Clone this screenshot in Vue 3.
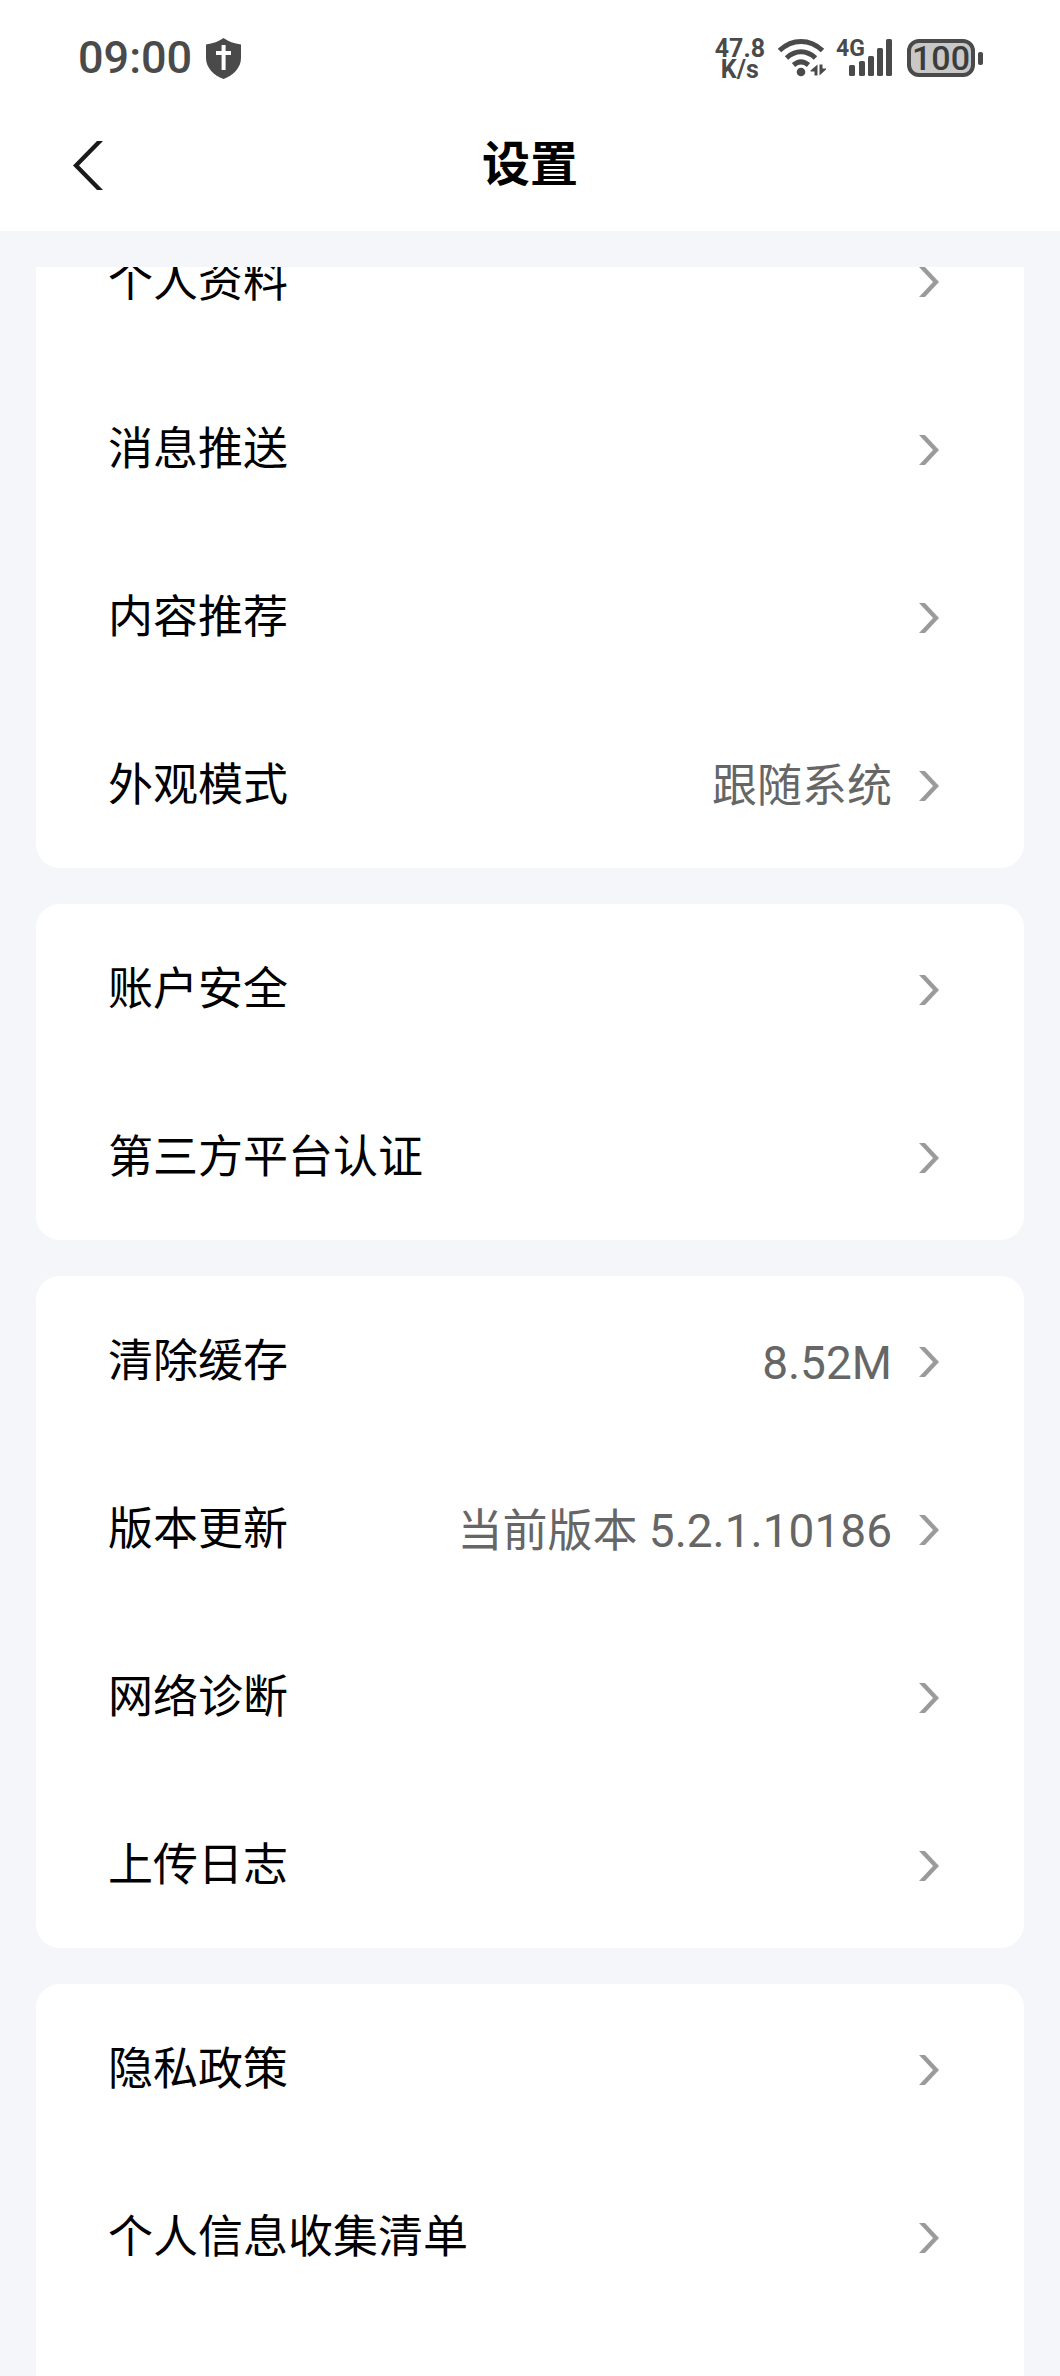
<script setup>
const groups = [
  {
    id: 'general',
    rows: [
      { label: '个人资料' },
      { label: '消息推送' },
      { label: '内容推荐' },
      { label: '外观模式', value: '跟随系统' },
    ],
  },
  {
    id: 'account',
    rows: [{ label: '账户安全' }, { label: '第三方平台认证' }],
  },
  {
    id: 'system',
    rows: [
      { label: '清除缓存', number: '8.52M' },
      { label: '版本更新', value: '当前版本 ', number: '5.2.1.10186' },
      { label: '网络诊断' },
      { label: '上传日志' },
    ],
  },
  {
    id: 'privacy',
    rows: [{ label: '隐私政策' }, { label: '个人信息收集清单' }],
  },
]
</script>

<template>
  <div class="page">
    <div class="status">
      <div class="status-side">
        <span class="clock">09:00</span>
        <svg class="shield" width="35" height="41" viewBox="0 0 35 41">
          <path d="M17.5 0C22 3.400 28 5.600 35 6.500V20C35 30 27 37.500 17.500 41C8 37.500 0 30 0 20V6.500C7 5.600 13 3.400 17.500 0Z" fill="#4a4a4a" />
          <path d="M15.600 7h4v6h5.400v4h-5.400v15h-4V17H10v-4h5.600z" fill="#fff" />
        </svg>
      </div>
      <div class="status-side">
        <span class="speed"><span>47.8</span><span>K/s</span></span>
        <svg class="wifi" width="48" height="38" viewBox="0 0 48 38">
          <g fill="none" stroke="#4a4a4a" stroke-width="5">
            <path d="M1.500 11.500C14.500 -0.500 31.500 -0.500 44.500 11.500" />
            <path d="M8.500 19C17.500 10.800 28.500 10.800 37.500 19" />
            <path d="M15.500 26C20.500 21.800 25.500 21.800 30.500 26" />
          </g>
          <g fill="#4a4a4a">
            <circle cx="23" cy="33" r="4.300" />
            <path d="M39.500 25.500V36.500H36.500V32.500H32.500V31.500Z" />
            <path d="M41.500 25.500V36.500L48 30.500V29.500H44.500V25.500Z" />
          </g>
        </svg>
        <div class="signal">
          <span class="network">4G</span>
          <svg width="43" height="38" viewBox="0 0 43 38">
            <g fill="#4a4a4a">
              <rect x="0" y="26" width="6" height="11" rx="1.500" />
              <rect x="10" y="22" width="6" height="15" rx="1.500" />
              <rect x="19" y="17" width="6" height="20" rx="1.500" />
              <rect x="28" y="9" width="6" height="28" rx="1.500" />
              <rect x="37" y="0" width="6" height="37" rx="1.500" />
            </g>
          </svg>
        </div>
        <div class="battery">
          <span class="battery-body">100</span>
          <span class="battery-tip"></span>
        </div>
      </div>
    </div>

    <header class="header">
      <button class="back" type="button" aria-label="返回">
        <svg width="30" height="49" viewBox="0 0 30 49">
          <polygon points="24,0 30,0 6,24.5 30,49 24,49 0,24.5" fill="#1a1a1a" />
        </svg>
      </button>
      <h1 class="title">设置</h1>
    </header>

    <main class="list">
      <ul v-for="group in groups" :key="group.id" class="card">
        <li v-for="row in group.rows" :key="row.label">
          <button class="row" type="button">
            <span class="label">{{ row.label }}</span>
            <span v-if="row.value || row.number" class="value">{{ row.value }}<span v-if="row.number" class="number">{{ row.number }}</span></span>
            <svg class="chevron" width="20" height="30" viewBox="0 0 20 30">
              <polygon points="0,0 6,0 20,15 6,30 0,30 14,15" fill="#9b9b9b" />
            </svg>
          </button>
        </li>
      </ul>
    </main>
  </div>
</template>

<style>
body {
  margin: 0;
  background: #f5f6fa;
}
</style>

<style scoped>
.page {
  display: flex;
  flex-direction: column;
  min-height: 100vh;
  background: #f5f6fa;
  font-family: Roboto, "Noto Sans CJK SC", sans-serif;
}

.status {
  display: flex;
  align-items: center;
  justify-content: space-between;
  box-sizing: border-box;
  height: 96px;
  padding: 20px 77px 0 78px;
  background: #fff;
  color: #4a4a4a;
}

.status-side {
  display: flex;
  align-items: center;
}

.clock {
  font-size: 45px;
  font-weight: 500;
  line-height: 48px;
}

.shield {
  margin-left: 14px;
}

.speed {
  display: flex;
  flex-direction: column;
  align-items: center;
  padding-top: 2px;
  font-size: 25px;
  font-weight: 700;
  line-height: 21px;
}

.wifi {
  margin-left: 13px;
}

.signal {
  position: relative;
  display: flex;
  margin-left: 23px;
}

.network {
  position: absolute;
  top: -2px;
  left: -13px;
  font-size: 23px;
  font-weight: 700;
  line-height: 24px;
}

.battery {
  display: flex;
  align-items: center;
  gap: 3px;
  margin-left: 15px;
}

.battery-body {
  display: flex;
  justify-content: center;
  box-sizing: border-box;
  width: 68px;
  height: 38px;
  border: 4px solid #4a4a4a;
  border-radius: 12px;
  background: #c8c8c8;
  color: #3c3c3c;
  font-size: 34px;
  font-weight: 500;
  line-height: 30px;
}

.battery-tip {
  width: 5px;
  height: 13px;
  border-radius: 2px;
  background: #4a4a4a;
}

.header {
  display: grid;
  grid-template-columns: 1fr auto 1fr;
  align-items: center;
  box-sizing: border-box;
  height: 135px;
  padding-top: 3px;
  background: #fff;
}

.back {
  display: flex;
  justify-self: start;
  margin-left: 49px;
  padding: 24px;
  border: 0;
  background: none;
}

.title {
  margin: 0;
  color: #000;
  font-size: 48px;
  font-weight: 700;
  line-height: 72px;
}

.list {
  display: flex;
  flex: 1;
  flex-direction: column;
  gap: 36px;
  margin: 36px 36px 0;
  overflow: hidden;
}

.card {
  margin: 0;
  padding: 0;
  border-radius: 24px;
  background: #fff;
  list-style: none;
}

/* The list is scrolled slightly, so the first card starts under the header. */
.card:first-child {
  margin-top: -71px;
}

.card:last-child {
  flex: 1;
  border-radius: 24px 24px 0 0;
}

.row {
  display: flex;
  align-items: center;
  box-sizing: border-box;
  width: 100%;
  height: 168px;
  padding: 3px 85px 0 72px;
  border: 0;
  background: none;
  font-family: inherit;
  font-size: 45px;
  line-height: 66px;
  text-align: left;
}

.label {
  flex: 1;
  color: #000;
}

.value {
  padding-top: 3px;
  color: #666;
  white-space: pre;
}

.number {
  font-size: 46px;
}

.chevron {
  margin-left: 27px;
}
</style>
